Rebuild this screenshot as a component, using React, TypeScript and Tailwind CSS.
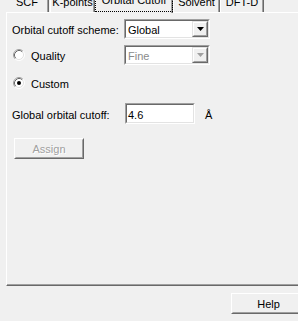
import type { ReactNode } from "react";

const font = "font-['Liberation_Sans',Arial,sans-serif]";

function Tab({ label, width, first = false }: { label: string; width: string; first?: boolean }) {
  return (
    <div
      className={`${width} h-[12px] flex items-end justify-center border-r border-r-[#696969] shadow-[inset_-1px_0_0_#a0a0a0] ${
        first ? "" : "border-l border-l-white"
      }`}
    >
      <span className="leading-[11px] pb-[4px] whitespace-nowrap">{label}</span>
    </div>
  );
}

function ActiveTab({ label }: { label: string }) {
  return (
    <div className="relative z-10 -mb-px w-[78px] h-[13px] flex items-end justify-center bg-[#f0f0f0] border-l border-l-white border-r border-r-[#696969] shadow-[inset_-1px_0_0_#a0a0a0]">
      <span className="leading-[11px] pb-[5px] px-[6px] mb-[1px] border border-dotted border-black whitespace-nowrap">
        {label}
      </span>
    </div>
  );
}

function Sunken({ children, className = "" }: { children: ReactNode; className?: string }) {
  return (
    <div className={`border border-t-[#a0a0a0] border-l-[#a0a0a0] border-b-white border-r-white ${className}`}>
      <div className="h-full border border-t-[#696969] border-l-[#696969] border-b-[#e3e3e3] border-r-[#e3e3e3]">
        {children}
      </div>
    </div>
  );
}

function Combo({ value, disabled = false }: { value: string; disabled?: boolean }) {
  return (
    <Sunken className="w-[86px] h-[20px]">
      <div className="flex h-full bg-white">
        <div className={`flex-1 pl-[2px] pt-[1px] leading-[16px] ${disabled ? "text-[#8a8a8a]" : "text-black"}`}>
          {value}
        </div>
        <div className="w-[16px] h-full border border-t-[#e3e3e3] border-l-[#e3e3e3] border-b-[#696969] border-r-[#696969]">
          <div className="h-full flex items-center justify-center bg-[#f0f0f0] border border-t-white border-l-white border-b-[#a0a0a0] border-r-[#a0a0a0]">
            <svg width="7" height="4" viewBox="0 0 7 4">
              <path d="M0 0h7L3.5 4z" fill={disabled ? "#a0a0a0" : "#000"} />
            </svg>
          </div>
        </div>
      </div>
    </Sunken>
  );
}

function Radio({ checked = false }: { checked?: boolean }) {
  return (
    <svg width="12" height="12" viewBox="0 0 12 12" className="shrink-0">
      <circle cx="6" cy="6" r="5" fill="#fff" />
      <path d="M2.11 9.89A5.5 5.5 0 0 1 9.89 2.11" stroke="#a0a0a0" fill="none" />
      <path d="M9.89 2.11A5.5 5.5 0 0 1 2.11 9.89" stroke="#fff" fill="none" />
      <path d="M2.82 9.18A4.5 4.5 0 0 1 9.18 2.82" stroke="#696969" fill="none" />
      <path d="M9.18 2.82A4.5 4.5 0 0 1 2.82 9.18" stroke="#e3e3e3" fill="none" />
      {checked && <circle cx="6" cy="6" r="2" fill="#000" />}
    </svg>
  );
}

function Button({ label, disabled = false, className = "" }: { label: string; disabled?: boolean; className?: string }) {
  return (
    <div className={`h-[21px] border border-t-white border-l-white border-b-[#696969] border-r-[#696969] ${className}`}>
      <div className="h-full flex items-center justify-center border border-t-[#f0f0f0] border-l-[#f0f0f0] border-b-[#a0a0a0] border-r-[#a0a0a0]">
        <span
          className={`pt-[1px] ${disabled ? "text-[#a0a0a0] [text-shadow:1px_1px_0_#fff]" : "text-black"}`}
        >
          {label}
        </span>
      </div>
    </div>
  );
}

export default function App() {
  return (
    <div className={`w-[298px] h-[321px] overflow-hidden bg-[#f0f0f0] text-[11px] text-black ${font}`}>
      <div className="flex items-end h-[12px] pl-[6px]">
        <Tab label="SCF" width="w-[43px]" first />
        <div className="w-[1px]" />
        <Tab label="K-points" width="w-[45px]" />
        <ActiveTab label="Orbital Cutoff" />
        <Tab label="Solvent" width="w-[47px]" />
        <Tab label="DFT-D" width="w-[44px]" />
      </div>

      <div className="ml-[6px] w-[400px] h-[274px] border-t border-t-white border-l border-l-white border-b border-b-[#696969] shadow-[inset_0_-1px_0_#a0a0a0] pl-[5px]">
        <div className="flex items-center h-[20px] mt-[6px]">
          <div className="w-[112px] pt-[3px]">Orbital cutoff scheme:</div>
          <Combo value="Global" />
        </div>

        <div className="flex items-center h-[20px] mt-[6px]">
          <div className="w-[112px] flex items-center gap-[6px] pl-[1px]">
            <Radio />
            <span className="pt-[2px]">Quality</span>
          </div>
          <Combo value="Fine" disabled />
        </div>

        <div className="flex items-center h-[14px] mt-[11px] gap-[6px] pl-[1px]">
          <Radio checked />
          <span className="pt-[2px]">Custom</span>
        </div>

        <div className="flex items-center h-[21px] mt-[13px]">
          <div className="w-[113px] pt-[3px]">Global orbital cutoff:</div>
          <Sunken className="w-[70px] h-[21px]">
            <div className="h-full bg-white pl-[1px] pt-[3px] leading-[14px]">4.6</div>
          </Sunken>
          <span className="ml-[10px] pt-[3px]">Å</span>
        </div>

        <Button label="Assign" disabled className="w-[70px] ml-[2px] mt-[14px]" />
      </div>

      <Button label="Help" className="w-[75px] ml-[231px] mt-[7px]" />
    </div>
  );
}
